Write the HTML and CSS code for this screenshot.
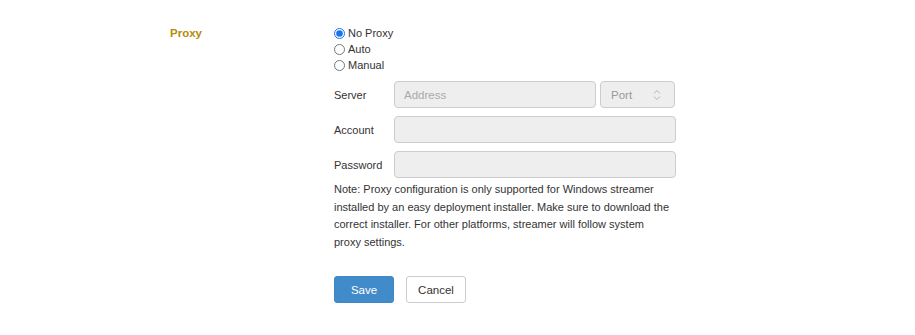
FILE: index.html
```html
<!DOCTYPE html>
<html lang="en">
  <head>
    <meta charset="UTF-8" />
    <title>Proxy</title>
    <link rel="stylesheet" href="styles.css">
  </head>
  <body>
    <div class="setting">
      <div class="setting-label">Proxy</div>
      <div class="setting-body">
        <label class="radio"><input type="radio" name="proxy" checked /> No Proxy</label>
        <label class="radio"><input type="radio" name="proxy" /> Auto</label>
        <label class="radio"><input type="radio" name="proxy" /> Manual</label>

        <div class="fields">
          <div class="field">
            <span class="field-label">Server</span>
            <input class="input address" type="text" placeholder="Address" disabled />
            <div class="input port">
              <span>Port</span>
              <svg width="8" height="12" viewBox="0 0 8 12">
                <path d="M1 4.5 L4 1.5 L7 4.5 M1 7.5 L4 10.5 L7 7.5" fill="none" stroke="#b5b5b5" stroke-width="1"/>
              </svg>
            </div>
          </div>
          <div class="field">
            <span class="field-label">Account</span>
            <input class="input wide" type="text" disabled />
          </div>
          <div class="field">
            <span class="field-label">Password</span>
            <input class="input wide" type="password" disabled />
          </div>
        </div>

        <p class="note">
          Note: Proxy configuration is only supported for Windows streamer
          installed by an easy deployment installer. Make sure to download the
          correct installer. For other platforms, streamer will follow system
          proxy settings.
        </p>

        <div class="actions">
          <button class="btn btn-primary">Save</button>
          <button class="btn">Cancel</button>
        </div>
      </div>
    </div>
  </body>
</html>
```

FILE: styles.css
```css
* {
  margin: 0;
  padding: 0;
  box-sizing: border-box;
}

body {
  font-family: "Liberation Sans", Arial, sans-serif;
  font-size: 11px;
  color: #333;
  background: #fff;
}

.setting {
  display: flex;
  padding: 25px 0 0 170px;
}

.setting-label {
  width: 164px;
  line-height: 16px;
  font-size: 11.5px;
  font-weight: bold;
  color: #b58b0c;
}

.setting-body {
  width: 342px;
}

/* radio rows */
.radio {
  display: flex;
  align-items: center;
  height: 16px;
}
.radio input {
  width: 11px;
  height: 11px;
  margin: 0 3px 0 0;
  accent-color: #1a73e8;
}

.fields {
  padding-top: 8px;
}

.field {
  display: flex;
  align-items: center;
  margin-bottom: 8px;
}
.field:last-child {
  margin-bottom: 9px;
}

.field-label {
  width: 60px;
}

.input {
  height: 27px;
  border: 1px solid #ccc;
  border-radius: 4px;
  background: #eee;
  font-family: inherit;
  font-size: 11.5px;
  padding: 0 9px;
  color: #999;
}
.input::placeholder {
  color: #aaa;
}

.address {
  width: 202px;
}

.port {
  width: 75px;
  margin-left: 4px;
  display: flex;
  align-items: center;
  justify-content: space-between;
  padding: 0 13px 0 10px;
}

.wide {
  width: 282px;
}

.note {
  width: 337px;
  margin-top: -6px;
  line-height: 17.5px;
  color: #333;
}

.actions {
  display: flex;
  gap: 12px;
  margin-top: 25px;
}

.btn {
  width: 60px;
  height: 27px;
  border: 1px solid #ccc;
  border-radius: 3px;
  background: #fff;
  font-family: inherit;
  font-size: 11.5px;
  color: #333;
}

.btn-primary {
  background: #428bca;
  border-color: #3f87c5;
  color: #fff;
}
```
